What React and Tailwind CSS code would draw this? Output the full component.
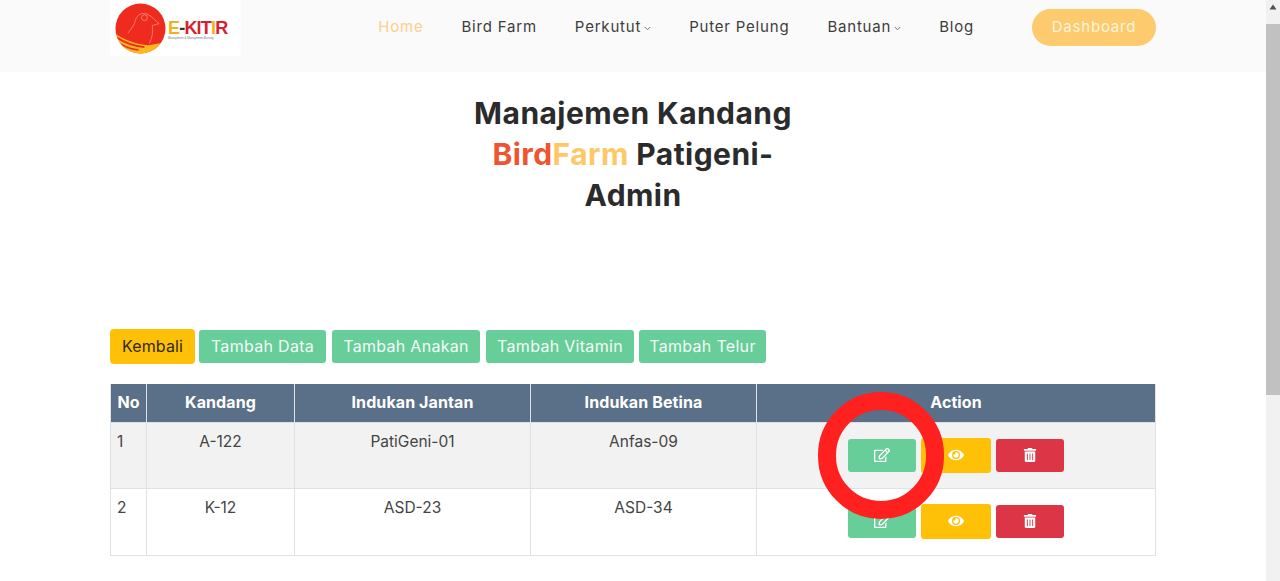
import { FaRegEdit, FaEye, FaTrashAlt } from 'react-icons/fa';

const navItems = [
  { label: 'Home', active: true },
  { label: 'Bird Farm' },
  { label: 'Perkutut', caret: true },
  { label: 'Puter Pelung' },
  { label: 'Bantuan', caret: true },
  { label: 'Blog' },
];

const actions = ['Tambah Data', 'Tambah Anakan', 'Tambah Vitamin', 'Tambah Telur'];

const rows = [
  { no: 1, kandang: 'A-122', jantan: 'PatiGeni-01', betina: 'Anfas-09' },
  { no: 2, kandang: 'K-12', jantan: 'ASD-23', betina: 'ASD-34' },
];

const Logo = () => (
  <div className="w-[131px] h-[56px] bg-white flex items-center pl-[5px] gap-[2px]">
    <svg width="51" height="51" viewBox="0 0 52 52" className="shrink-0">
      <defs>
        <clipPath id="logo-disc">
          <circle cx="26" cy="26" r="25.5" />
        </clipPath>
      </defs>
      <g clipPath="url(#logo-disc)">
        <rect width="52" height="52" fill="#ef2b1f" />
        <path d="M0 31 C10 38 22 42 34 43 L52 40 L52 52 L0 52 Z" fill="#fbb81c" />
        <path d="M0 34 C10 41 20 44 30 45" stroke="#ef2b1f" strokeWidth="2" fill="none" />
        <path d="M0 38 C8 44 16 47 24 48" stroke="#ef2b1f" strokeWidth="1.5" fill="none" />
        <path d="M13 31 C17 26 20 22 21 17 C23 11 29 9 34 12 C38 14 41 18 45 21 L38 23 C39 29 38 36 35 41" stroke="#f9907a" strokeWidth="0.8" fill="none" />
        <circle cx="30" cy="15" r="3" stroke="#f9907a" strokeWidth="0.8" fill="none" />
      </g>
    </svg>
    <div className="flex flex-col font-['Liberation_Sans',sans-serif] pt-[3px]">
      <span className="text-[18px] leading-[16px] font-bold tracking-[-0.8px] text-[#d8202c]">
        <span className="text-[#efb21e]">E</span>
        <span className="text-[#333]">-</span>
        KIT<span className="text-[#efb21e]">I</span>R
      </span>
      <span className="text-[3px] leading-[4px] text-[#777] whitespace-nowrap">Manajemen &amp; Manajemen Burung</span>
    </div>
  </div>
);

const Scrollbar = () => (
  <div className="w-[14px] shrink-0 bg-[#f1f1f1] flex flex-col items-center">
    <div className="h-[24px] w-full flex justify-center pt-[4px]">
      <svg width="8" height="6" viewBox="0 0 8 6">
        <path d="M4 0.5 L7.5 5.5 L0.5 5.5 Z" fill="#505050" />
      </svg>
    </div>
    <div className="w-full h-[371px] bg-[#c1c1c1]" />
  </div>
);

const ActionButtons = () => (
  <div className="flex items-center justify-center gap-[5px] text-white">
    <button className="w-[68px] h-[33px] bg-[#67cd99] rounded-[3px] flex items-center justify-center">
      <FaRegEdit className="text-[16px]" />
    </button>
    <button className="w-[70px] h-[35px] bg-[#ffc107] rounded-[3px] flex items-center justify-center">
      <FaEye className="text-[16px]" />
    </button>
    <button className="w-[68px] h-[33px] bg-[#dc3545] rounded-[3px] flex items-center justify-center">
      <FaTrashAlt className="text-[14px]" />
    </button>
  </div>
);

export default function App() {
  return (
    <div className="h-[581px] overflow-hidden flex bg-white font-['Inter',sans-serif] text-[#444]">
      <div className="flex-1 min-w-0">
        <header className="h-[72px] bg-[#fafafa] px-[110px] flex items-start justify-between">
          <Logo />
          <div className="flex items-start">
            <nav className="flex items-center gap-[38px] h-[54px] mr-[58px]">
              {navItems.map((item) => (
                <a
                  key={item.label}
                  className={`flex items-center gap-[3px] text-[15px] tracking-[0.8px] ${item.active ? 'text-[#fcd08a]' : 'text-[#3d3d3d]'}`}
                >
                  {item.label}
                  {item.caret && (
                    <svg width="7" height="5" viewBox="0 0 7 5" className="mt-[2px]">
                      <path d="M0.8 1 L3.5 3.8 L6.2 1" stroke="#777" strokeWidth="1" fill="none" />
                    </svg>
                  )}
                </a>
              ))}
            </nav>
            <button className="mt-[9px] w-[124px] h-[37px] rounded-full bg-[#fdcb6e] text-[#fff3dc] text-[15px] tracking-[0.8px]">
              Dashboard
            </button>
          </div>
        </header>

        <main className="px-[110px]">
          <h1 className="mt-[21px] h-[122px] text-center text-[30px] leading-[41px] font-bold tracking-[0.45px] text-[#2b2b2b]">
            <span className="block">Manajemen Kandang</span>
            <span className="block">
              <span className="text-[#ef5430]">Bird</span>
              <span className="text-[#fdc968]">Farm</span> Patigeni-
            </span>
            <span className="block">Admin</span>
          </h1>

          <div className="mt-[114px] flex items-center h-[35px] text-[16px] leading-[22px] tracking-[0.3px]">
            <button className="w-[85px] h-[35px] pb-[2px] bg-[#ffc107] text-[#2e2a12] rounded-[4px] tracking-[0.1px]">
              Kembali
            </button>
            <button className="w-[127px] h-[33px] pb-[2px] ml-[4px] bg-[#67cd99] text-[#f3fbf7] rounded-[3px]">
              {actions[0]}
            </button>
            <button className="w-[148px] h-[33px] pb-[2px] ml-[6px] bg-[#67cd99] text-[#f3fbf7] rounded-[3px]">
              {actions[1]}
            </button>
            <button className="w-[148px] h-[33px] pb-[2px] ml-[6px] bg-[#67cd99] text-[#f3fbf7] rounded-[3px]">
              {actions[2]}
            </button>
            <button className="w-[127px] h-[33px] pb-[2px] ml-[5px] bg-[#67cd99] text-[#f3fbf7] rounded-[3px]">
              {actions[3]}
            </button>
          </div>

          <div className="relative mt-[20px]">
            <table className="w-full table-fixed border-collapse text-[15.5px]">
              <colgroup>
                <col className="w-[36px]" />
                <col className="w-[148px]" />
                <col className="w-[236px]" />
                <col className="w-[226px]" />
                <col />
              </colgroup>
              <thead>
                <tr className="h-[38px] bg-[#5a7088] text-white text-[16px]">
                  {['No', 'Kandang', 'Indukan Jantan', 'Indukan Betina', 'Action'].map((title) => (
                    <th key={title} className="border border-[#dee2e6] border-b-0 border-t-0 pb-[2px] text-center font-bold tracking-[0.1px]">
                      {title}
                    </th>
                  ))}
                </tr>
              </thead>
              <tbody>
                {rows.map((row) => (
                  <tr key={row.no} className={row.no === 1 ? 'h-[66px] bg-[#f2f2f2]' : 'h-[67px] bg-white'}>
                    <td className="border border-[#dee2e6] align-top pt-[7px] pl-[6px]">{row.no}</td>
                    <td className="border border-[#dee2e6] align-top pt-[7px] text-center">{row.kandang}</td>
                    <td className="border border-[#dee2e6] align-top pt-[7px] text-center">{row.jantan}</td>
                    <td className="border border-[#dee2e6] align-top pt-[7px] text-center">{row.betina}</td>
                    <td className="border border-[#dee2e6] align-top pt-[15px] pb-[15px]">
                      <ActionButtons />
                    </td>
                  </tr>
                ))}
              </tbody>
            </table>
            {/* annotation ring drawn over the table */}
            <div className="absolute left-[708px] top-[8px] w-[126px] h-[127px] rounded-full border-[18px] border-[#ff2020]" />
          </div>
        </main>
      </div>
      <Scrollbar />
    </div>
  );
}
